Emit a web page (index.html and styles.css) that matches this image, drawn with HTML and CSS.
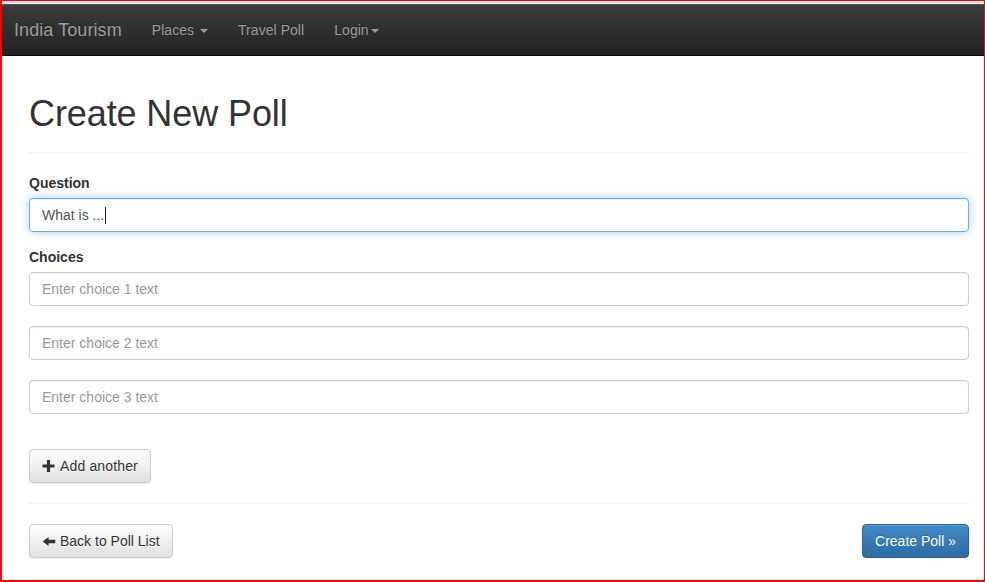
FILE: index.html
```html
<!DOCTYPE html>
<html lang="en">
<head>
<meta charset="utf-8">
<title>Create New Poll</title>
<link rel="stylesheet" href="styles.css">
</head>
<body>
<div class="frame">
  <div class="topstrip"></div>
  <nav class="navbar">
    <a class="brand" href="#">India Tourism</a>
    <ul class="nav">
      <li><a href="#">Places <b class="caret"></b></a></li>
      <li><a href="#">Travel Poll</a></li>
      <li><a href="#">Login<b class="caret"></b></a></li>
    </ul>
  </nav>
  <main class="container">
    <div class="page-header">
      <h1>Create New Poll</h1>
    </div>
    <form class="poll-form">
      <div class="form-group">
        <label for="q">Question</label>
        <div class="input-wrap">
          <input id="q" class="form-control focused" type="text" value="What is ...">
          <span class="caret-line"></span>
        </div>
      </div>
      <div class="form-group choices">
        <label>Choices</label>
        <input class="form-control" type="text" placeholder="Enter choice 1 text">
        <input class="form-control" type="text" placeholder="Enter choice 2 text">
        <input class="form-control" type="text" placeholder="Enter choice 3 text">
      </div>
      <div class="add-row">
        <button type="button" class="btn btn-default btn-add">
          <svg class="icon" width="13" height="12" viewBox="0 0 12 12"><path d="M4.4 0h3.2v4.4H12v3.2H7.6V12H4.4V7.6H0V4.4h4.4z" fill="#333"/></svg>
          <span>Add another</span>
        </button>
      </div>
      <hr class="divider">
      <div class="actions">
        <button type="button" class="btn btn-default">
          <svg class="icon" width="14" height="9" viewBox="0 0 14 10"><path d="M0 5L6.5 0v3H14v4H6.5v3z" fill="#333"/></svg>
          <span>Back to Poll List</span>
        </button>
        <button type="submit" class="btn btn-primary">Create Poll &raquo;</button>
      </div>
    </form>
  </main>
</div>
</body>
</html>
```
FILE: styles.css
```css
* { box-sizing: border-box; }
html, body { margin: 0; padding: 0; }
body {
  font-family: "Liberation Sans", Arial, Helvetica, sans-serif;
  font-size: 14px;
  line-height: 20px;
  color: #333;
  background: #fff;
}
.frame {
  width: 985px;
  height: 582px;
  border-style: solid;
  border-color: #ff0000;
  border-width: 1px 1px 2px 2px;
  overflow: hidden;
}
.topstrip {
  height: 3px;
  background: #e4e4e4;
}
.navbar {
  height: 52px;
  display: flex;
  align-items: flex-start;
  background: linear-gradient(to bottom, #3c3c3c 0%, #222 100%);
  border-bottom: 1px solid #080808;
  box-shadow: inset 0 1px 0 rgba(255,255,255,.15);
  padding-left: 12px;
}
.brand {
  color: #9d9d9d;
  font-size: 18px;
  line-height: 20px;
  letter-spacing: 0.08px;
  padding: 16px 15px 15px 0;
  text-decoration: none;
  text-shadow: 0 -1px 0 rgba(0,0,0,.25);
}
.nav {
  list-style: none;
  margin: 0;
  padding: 0;
  display: flex;
}
.nav a {
  display: block;
  color: #9d9d9d;
  text-decoration: none;
  padding: 16px 15px 15px;
  line-height: 20px;
  letter-spacing: 0.05px;
  text-shadow: 0 -1px 0 rgba(0,0,0,.25);
}
.caret {
  display: inline-block;
  width: 0;
  height: 0;
  margin-left: 2px;
  vertical-align: middle;
  border-top: 4px solid #9d9d9d;
  border-left: 4px solid transparent;
  border-right: 4px solid transparent;
}
.container {
  padding: 0 15px 0 27px;
}
.page-header {
  margin-top: 38px;
  padding-bottom: 18px;
  border-bottom: 1px solid #eee;
  margin-bottom: 20px;
}
.page-header h1 {
  margin: 0;
  font-size: 36px;
  line-height: 40px;
  font-weight: 500;
  color: #333;
  letter-spacing: -0.1px;
}
.form-group {
  margin-bottom: 15px;
}
label {
  display: block;
  font-weight: bold;
  margin-bottom: 5px;
}
.form-control {
  display: block;
  width: 100%;
  height: 34px;
  padding: 6px 12px;
  font-family: inherit;
  font-size: 14px;
  line-height: 20px;
  color: #555;
  background: #fff;
  border: 1px solid #ccc;
  border-radius: 4px;
  box-shadow: inset 0 1px 1px rgba(0,0,0,.075);
  outline: none;
}
.form-control::placeholder { color: #999; }
.form-control.focused {
  border-color: #66afe9;
  box-shadow: inset 0 1px 1px rgba(0,0,0,.075), 0 0 8px rgba(102,175,233,.6);
}
.input-wrap { position: relative; }
.caret-line {
  position: absolute;
  left: 76px;
  top: 9px;
  width: 1px;
  height: 17px;
  background: #222;
}
.choices .form-control + .form-control {
  margin-top: 20px;
}
.add-row {
  padding-top: 20px;
}
.btn {
  display: inline-flex;
  align-items: center;
  gap: 4px;
  height: 34px;
  padding: 6px 12px;
  font-family: inherit;
  font-size: 14px;
  line-height: 20px;
  border-radius: 4px;
  border: 1px solid;
  cursor: pointer;
}
.btn-add { gap: 5px; letter-spacing: 0.15px; }
.btn-default {
  color: #333;
  background: linear-gradient(to bottom, #fff 0%, #e0e0e0 100%);
  border-color: #ccc;
  text-shadow: 0 1px 0 #fff;
  box-shadow: inset 0 1px 0 rgba(255,255,255,.15), 0 1px 1px rgba(0,0,0,.075);
}
.btn-primary {
  color: #fff;
  background: linear-gradient(to bottom, #428bca 0%, #2d6ca2 100%);
  border-color: #2b669a;
  text-shadow: 0 -1px 0 rgba(0,0,0,.2);
  box-shadow: inset 0 1px 0 rgba(255,255,255,.15), 0 1px 1px rgba(0,0,0,.075);
}
.icon { display: block; flex: none; }
.divider {
  margin: 20px 0;
  border: 0;
  border-top: 1px solid #eee;
}
.actions {
  display: flex;
  justify-content: space-between;
}
```
